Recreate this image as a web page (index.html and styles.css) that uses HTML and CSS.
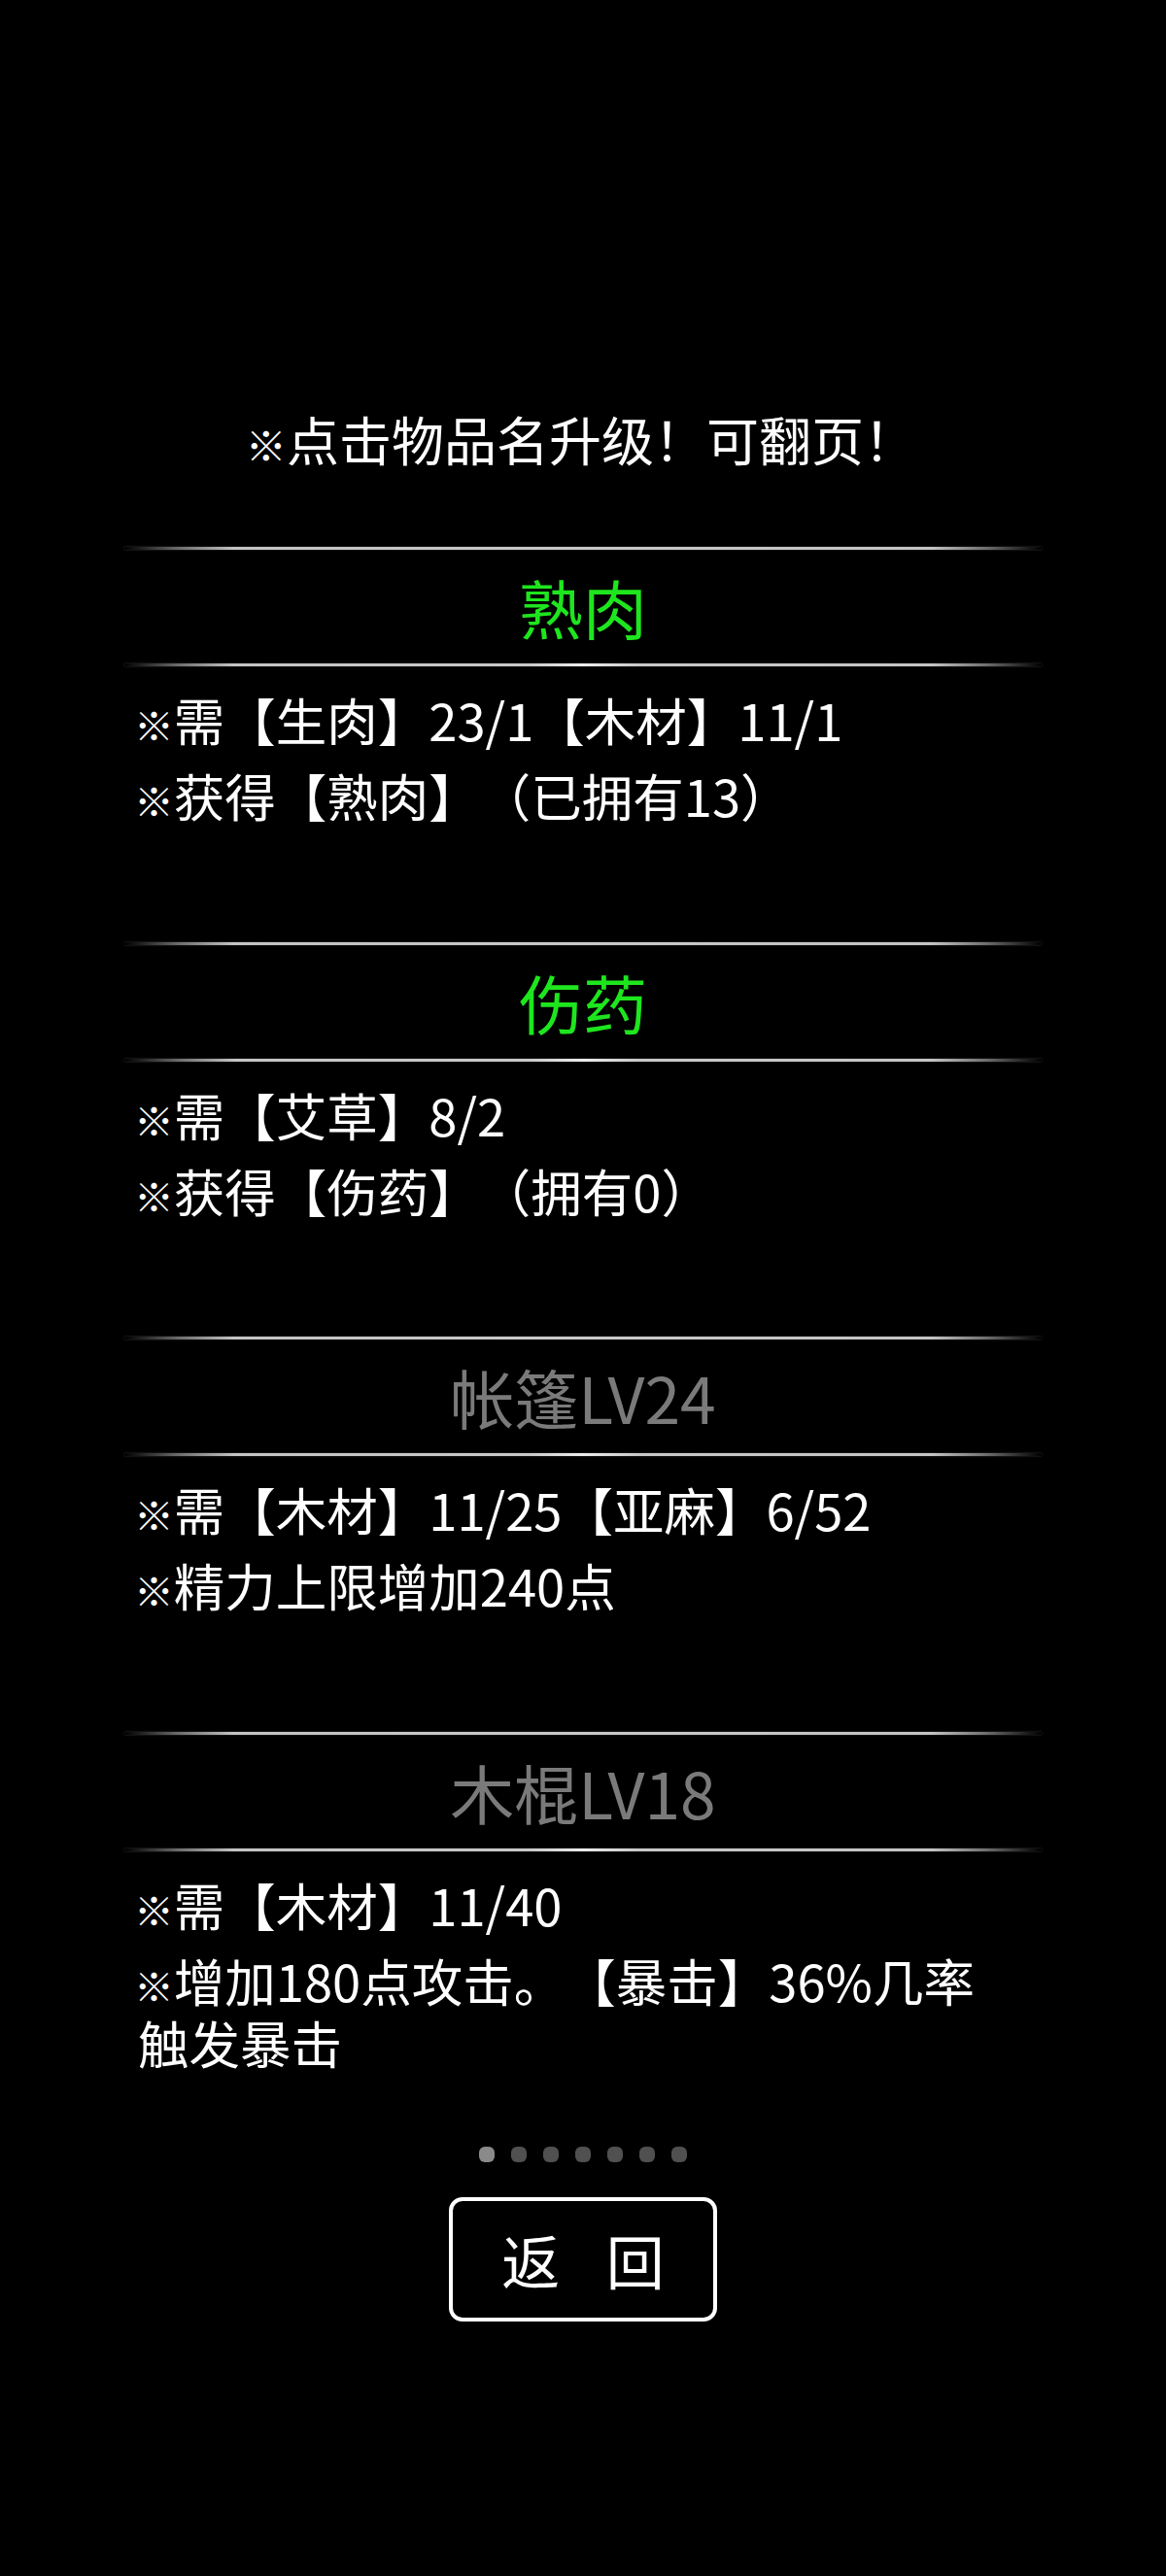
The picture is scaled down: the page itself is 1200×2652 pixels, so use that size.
FILE: index.html
```html
<!DOCTYPE html>
<html lang="zh-CN">
<head>
<meta charset="utf-8">
<title>制作</title>
<link rel="stylesheet" href="styles.css">
</head>
<body>
<div class="page">
  <p class="tip"><span class="mark">※</span>点击物品名升级！可翻页！</p>
  <div class="list">
    <section class="item">
      <div class="rule"></div>
      <h2 class="name name-ok">熟肉</h2>
      <div class="rule rule-mid"></div>
      <div class="desc">
        <p><span class="mark">※</span>需【生肉】23/1【木材】11/1</p>
        <p><span class="mark">※</span>获得【熟肉】（已拥有13）</p>
      </div>
    </section>
    <section class="item">
      <div class="rule"></div>
      <h2 class="name name-ok">伤药</h2>
      <div class="rule rule-mid"></div>
      <div class="desc">
        <p><span class="mark">※</span>需【艾草】8/2</p>
        <p><span class="mark">※</span>获得【伤药】（拥有0）</p>
      </div>
    </section>
    <section class="item">
      <div class="rule"></div>
      <h2 class="name name-off">帐篷LV24</h2>
      <div class="rule rule-mid"></div>
      <div class="desc">
        <p><span class="mark">※</span>需【木材】11/25【亚麻】6/52</p>
        <p><span class="mark">※</span>精力上限增加240点</p>
      </div>
    </section>
    <section class="item">
      <div class="rule"></div>
      <h2 class="name name-off">木棍LV18</h2>
      <div class="rule rule-mid"></div>
      <div class="desc">
        <p><span class="mark">※</span>需【木材】11/40</p>
        <p><span class="mark">※</span>增加180点攻击。【暴击】36%几率触发暴击</p>
      </div>
    </section>
  </div>
  <div class="dots">
    <span class="dot dot-active"></span>
    <span class="dot"></span>
    <span class="dot"></span>
    <span class="dot"></span>
    <span class="dot"></span>
    <span class="dot"></span>
    <span class="dot"></span>
  </div>
  <button class="back" type="button">返 回</button>
</div>
</body>
</html>
```
FILE: styles.css
```css
html, body {
  margin: 0;
  padding: 0;
  background: #000;
}

body {
  width: 1200px;
  height: 2652px;
  overflow: hidden;
  font-family: "Noto Sans CJK SC", "Noto Sans", sans-serif;
  color: #fff;
  text-spacing-trim: space-all;
}

.page {
  padding-top: 420px;
  display: flex;
  flex-direction: column;
  align-items: center;
}

.tip {
  margin: 0;
  font-size: 54px;
  line-height: 64px;
  text-align: center;
}

.mark {
  display: inline-block;
  font-size: 0.78em;
  line-height: 1;
  margin: 0 0 0 -0.1em;
  font-weight: 700;
}

.list {
  width: 944px;
  margin-top: 79px;
}

.item {
  height: 406.5px;
}

.rule {
  height: 3px;
  background: linear-gradient(to right,
    rgba(200, 200, 200, 0) 0%,
    rgba(200, 200, 200, 0.55) 6%,
    #c4c4c4 12%,
    #c8c8c8 50%,
    #c4c4c4 88%,
    rgba(200, 200, 200, 0.55) 94%,
    rgba(200, 200, 200, 0) 100%);
  box-shadow: 0 0 2px rgba(255, 255, 255, 0.25);
}

.rule-mid {
  background: linear-gradient(to right,
    rgba(200, 200, 200, 0) 0%,
    rgba(200, 200, 200, 0.55) 6%,
    #c4c4c4 12%,
    #c8c8c8 44%,
    #ececec 50%,
    #c8c8c8 56%,
    #c4c4c4 88%,
    rgba(200, 200, 200, 0.55) 94%,
    rgba(200, 200, 200, 0) 100%);
}

.name {
  margin: 0;
  height: 117px;
  line-height: 117px;
  text-align: center;
  font-size: 66px;
  font-weight: 400;
}

.name-ok {
  color: #1ee61e;
}

.name-off {
  color: #7a7a7a;
}

.desc {
  padding: 22px 30px 0 14px;
  font-size: 52.5px;
}

.desc p {
  margin: 0 0 14px;
  line-height: 64px;
}

.dots {
  display: flex;
  gap: 17px;
  margin-top: 21px;
}

.dot {
  width: 16px;
  height: 16px;
  border-radius: 6px;
  background: #505050;
}

.dot-active {
  background: #8a8a8a;
}

.back {
  margin-top: 36px;
  width: 276px;
  height: 128px;
  box-sizing: border-box;
  border: 4px solid #fff;
  border-radius: 14px;
  background: #000;
  color: #fff;
  font-family: "Noto Sans CJK SC", "Noto Sans", sans-serif;
  font-size: 60px;
  line-height: 1;
  letter-spacing: 17px;
  padding: 0 0 0 17px;
}
```
